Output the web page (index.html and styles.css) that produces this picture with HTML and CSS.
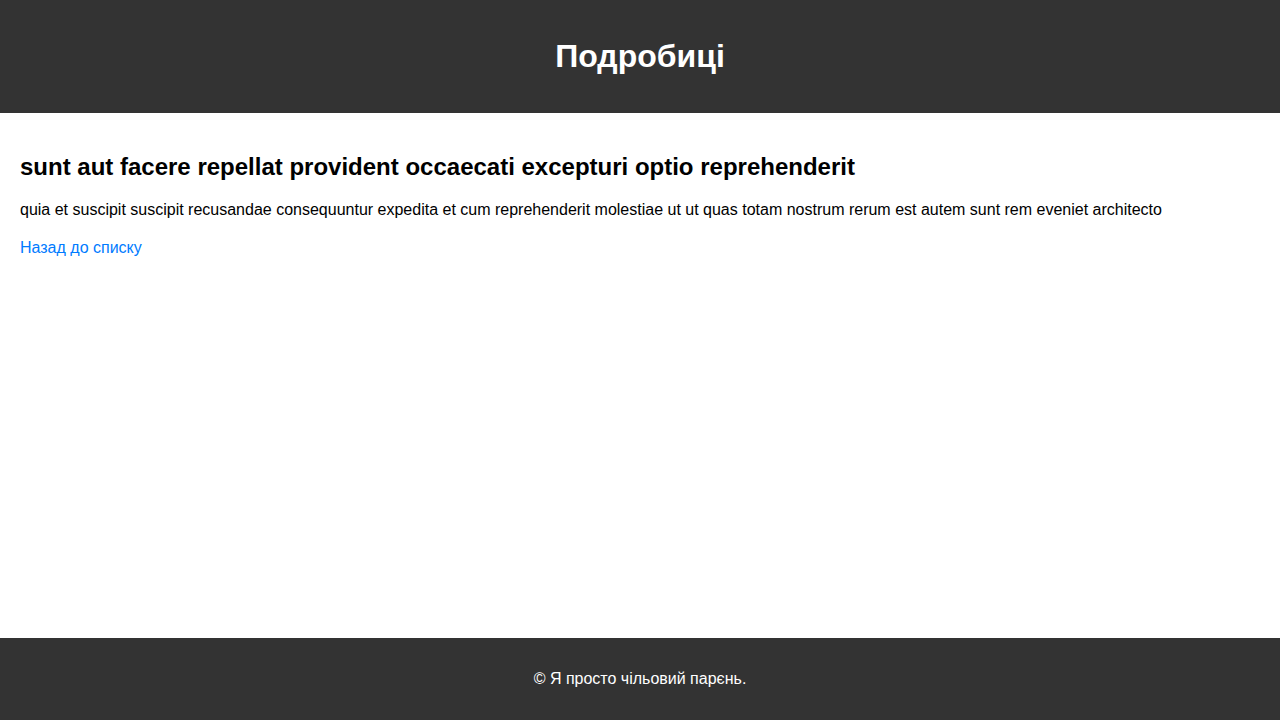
FILE: index.html
```html
<!DOCTYPE html>
<html lang="uk">
<head>
<meta charset="utf-8">
<title>Подробиці</title>
<link rel="stylesheet" href="styles.css">
</head>
<body>
<header class="site-header">
  <h1 class="site-title">Подробиці</h1>
</header>
<main class="content">
  <h2 class="post-title">sunt aut facere repellat provident occaecati excepturi optio reprehenderit</h2>
  <p class="post-body">quia et suscipit suscipit recusandae consequuntur expedita et cum reprehenderit molestiae ut ut quas totam nostrum rerum est autem sunt rem eveniet architecto</p>
  <a class="back-link" href="#">Назад до списку</a>
</main>
<footer class="site-footer">
  <p class="footer-text">© Я просто чільовий парєнь.</p>
</footer>
</body>
</html>
```
FILE: styles.css
```css
html, body {
  margin: 0;
  padding: 0;
}
body {
  font-family: "Liberation Sans", Arial, sans-serif;
  color: #000;
  background: #fff;
  min-height: 100vh;
  display: flex;
  flex-direction: column;
}
.site-header {
  background: #333;
  color: #fff;
  padding: 16px;
  text-align: center;
}
.site-title {
  margin: 20.5px 0 22.5px;
  font-size: 32px;
  line-height: 38px;
  font-weight: bold;
}
.content {
  flex: 1;
  padding: 20px;
}
.post-title {
  font-size: 24px;
  font-weight: bold;
  margin: 20px 0 18px;
  line-height: 28px;
}
.post-body {
  font-size: 16px;
  margin: 0 0 16px;
  line-height: 22px;
}
.back-link {
  color: #007bff;
  text-decoration: none;
  font-size: 16px;
  line-height: 22px;
}
.site-footer {
  background: #333;
  color: #fff;
  text-align: center;
  padding: 16px;
}
.footer-text {
  margin: 16px 0;
  font-size: 16px;
  line-height: 18px;
}
```
